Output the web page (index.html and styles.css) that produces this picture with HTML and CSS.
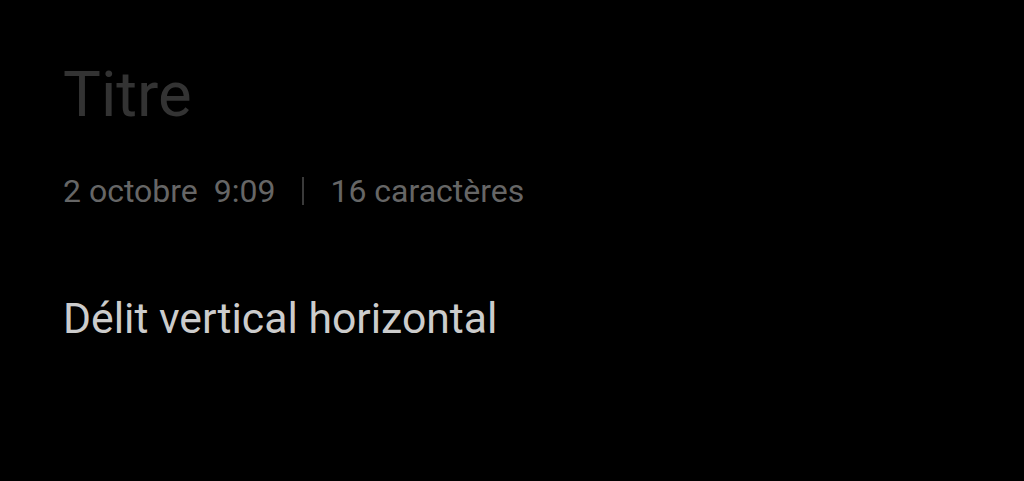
FILE: index.html
```html
<!DOCTYPE html>
<html lang="fr">
<head>
<meta charset="utf-8">
<link rel="stylesheet" href="styles.css">
</head>
<body>
<main class="note">
  <h1 class="title">Titre</h1>
  <div class="meta">
    <span class="date">2 octobre&nbsp;&nbsp;9:09</span>
    <span class="sep"></span>
    <span class="count">16 caractères</span>
  </div>
  <p class="body-text">Délit vertical horizontal</p>
</main>
</body>
</html>
```
FILE: styles.css
```css
html, body {
  margin: 0;
  padding: 0;
  background: #000;
  height: 100%;
}
body {
  font-family: Roboto, "Noto Sans", sans-serif;
}
.note {
  padding: 59px 64px 0 63px;
  display: flex;
  flex-direction: column;
}
.title {
  margin: 0;
  font-weight: 400;
  font-size: 63.5px;
  line-height: 72px;
  color: #333333;
}
.meta {
  margin-top: 40px;
  display: flex;
  align-items: center;
  font-size: 32px;
  line-height: 40px;
  color: #666666;
}
.sep {
  display: inline-block;
  width: 2px;
  height: 28px;
  background: #3a3a3a;
  margin: 0 26px 0 27px;
}
.body-text {
  margin: 82px 0 0 0;
  font-size: 42.7px;
  line-height: 50px;
  color: #cccccc;
}
```
